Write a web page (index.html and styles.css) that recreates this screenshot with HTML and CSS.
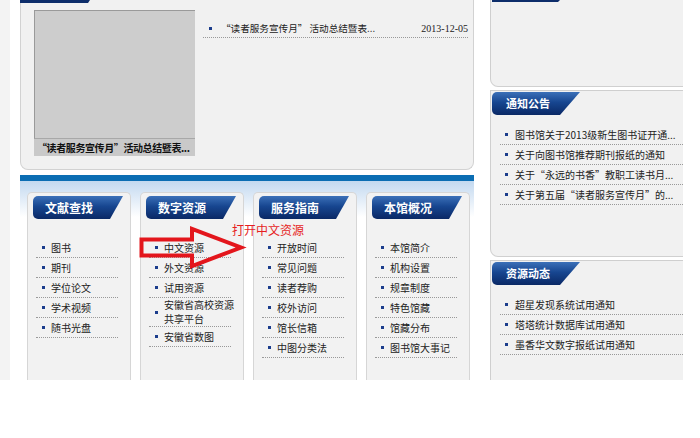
FILE: index.html
```html
<!DOCTYPE html>
<html lang="zh-CN">
<head>
  <meta charset="UTF-8" />
  <title>图书馆首页</title>
  <link rel="stylesheet" href="styles.css">
</head>
<body>
  <div class="page">
    <div class="strip"></div>

    <div class="main">
      <!-- news block -->
      <div class="panel-top">
        <div class="stub"></div>
        <div class="top-body">
          <div class="photo">
            <div class="photo-img"></div>
            <div class="photo-cap">“读者服务宣传月”活动总结暨表...</div>
          </div>
          <ul class="news">
            <li><span>“读者服务宣传月” 活动总结暨表...</span><span class="date">2013-12-05</span></li>
          </ul>
        </div>
      </div>

      <!-- quick links -->
      <div class="links">
        <div class="box">
          <div class="tab">文献查找</div>
          <ul class="list">
            <li>图书</li>
            <li>期刊</li>
            <li>学位论文</li>
            <li>学术视频</li>
            <li>随书光盘</li>
          </ul>
        </div>
        <div class="box">
          <div class="tab">数字资源</div>
          <ul class="list">
            <li>中文资源</li>
            <li>外文资源</li>
            <li>试用资源</li>
            <li class="two">安徽省高校资源<br>共享平台</li>
            <li>安徽省数图</li>
          </ul>
        </div>
        <div class="box">
          <div class="tab">服务指南</div>
          <ul class="list">
            <li>开放时间</li>
            <li>常见问题</li>
            <li>读者荐购</li>
            <li>校外访问</li>
            <li>馆长信箱</li>
            <li>中图分类法</li>
          </ul>
        </div>
        <div class="box">
          <div class="tab">本馆概况</div>
          <ul class="list">
            <li>本馆简介</li>
            <li>机构设置</li>
            <li>规章制度</li>
            <li>特色馆藏</li>
            <li>馆藏分布</li>
            <li>图书馆大事记</li>
          </ul>
        </div>
      </div>
    </div>

    <div class="side">
      <div class="side-box side-top">
        <div class="stub stub-side"></div>
      </div>
      <div class="side-box notice">
        <div class="tab tab-side">通知公告</div>
        <ul class="list side-list">
          <li>图书馆关于2013级新生图书证开通...</li>
          <li>关于向图书馆推荐期刊报纸的通知</li>
          <li>关于“永远的书香”教职工读书月...</li>
          <li>关于第五届“读者服务宣传月”的...</li>
        </ul>
      </div>
      <div class="side-box res">
        <div class="tab tab-side">资源动态</div>
        <ul class="list side-list">
          <li>超星发现系统试用通知</li>
          <li>塔塔统计数据库试用通知</li>
          <li>墨香华文数字报纸试用通知</li>
        </ul>
      </div>
    </div>

    <!-- red annotation -->
    <div class="note">打开中文资源</div>
    <svg class="arrow" width="700" height="438" viewBox="0 0 700 438">
      <polygon points="141.5,239.5 192,239.5 192,229 241,247.5 192,266 192,255.5 141.5,255.5"
               fill="none" stroke="#e3161c" stroke-width="4" stroke-linejoin="miter" />
    </svg>
  </div>
</body>
</html>
```

FILE: styles.css
```css
* { box-sizing: border-box; }
body {
  margin: 0;
  background: #fff;
  font-family: "Noto Sans CJK SC", sans-serif;
  font-size: 10px;
  color: #222;
}
.page {
  position: relative;
  display: flex;
  align-items: flex-start;
  width: 700px;
  height: 438px;
}
.strip {
  width: 10px;
  height: 380px;
  background: #f3f3f3;
}
.main {
  width: 454px;
  margin-left: 10px;
}
.panel-top {
  height: 170px;
  background: #f1f1f1;
  border: 1px solid #d2d2d2;
  border-top: none;
  border-radius: 0 0 8px 8px;
}
.stub {
  width: 70px;
  height: 3px;
  margin-left: -1px;
  background: #0d2d6a;
  clip-path: polygon(0 0, 100% 0, calc(100% - 2px) 100%, 0 100%);
}
.top-body {
  display: flex;
  padding: 7px 0 0 13px;
}
.photo { width: 161px; }
.photo-img {
  height: 129px;
  background: #cdcdcd;
  border-top: 1px solid #9a9a9a;
  border-left: 1px solid #9a9a9a;
  border-bottom: 1px solid #a8a8a8;
}
.photo-cap {
  height: 17px;
  line-height: 17px;
  padding-left: 3px;
  background: #c9c9c9;
  font-size: 10px;
  font-weight: bold;
  letter-spacing: -0.4px;
  color: #111;
  white-space: nowrap;
}
.news {
  list-style: none;
  margin: 9px 0 0 8px;
  padding: 0;
  width: 265px;
}
.news li {
  display: flex;
  align-items: center;
  height: 19px;
  padding-left: 6px;
  border-bottom: 1px dotted #999;
  font-size: 9.6px;
}
.news li::before {
  content: "";
  width: 3px;
  height: 3px;
  margin-right: 9px;
  background: #1c3d8c;
}
.news .date {
  margin-left: auto;
  font-family: "Liberation Serif", serif;
  font-size: 10px;
}
.links {
  display: flex;
  gap: 9px;
  height: 205px;
  margin-top: 5px;
  padding: 11px 0 0 7px;
  border-top: 6px solid #0b6db3;
  background: linear-gradient(#c3d9f0, #fff 36px);
}
.box {
  width: 104px;
  height: 188px;
  padding: 3px 0 0 5px;
  background: #f2f2f2;
  border: 1px solid #d6d6d6;
  border-bottom: none;
  border-radius: 5px 5px 0 0;
}
.tab {
  width: 90px;
  height: 23px;
  line-height: 23px;
  padding-left: 12px;
  color: #fff;
  font-size: 12px;
  font-weight: bold;
  background: linear-gradient(#3b70b8, #174690 45%, #0a2865);
  border-radius: 5px 0 0 5px;
  clip-path: polygon(0 0, 100% 0, calc(100% - 13px) 100%, 0 100%);
}
.list {
  list-style: none;
  margin: 19px 0 0 3px;
  padding: 0;
  width: 82px;
}
.list li {
  display: flex;
  align-items: center;
  height: 20px;
  padding-left: 6px;
  border-bottom: 1px dotted #999;
  white-space: nowrap;
}
.list li::before {
  content: "";
  flex: none;
  width: 3px;
  height: 3px;
  margin-right: 6px;
  background: #1c3d8c;
}
.list li.two {
  height: 29px;
  line-height: 14px;
}
.side {
  width: 193px;
  margin-left: 16px;
}
.side-box {
  background: #f1f1f1;
  border-left: 1px solid #cfcfcf;
}
.side-top {
  height: 87px;
  border-bottom: 1px solid #d0d0d0;
  border-bottom-left-radius: 8px;
}
.stub-side {
  width: 68px;
  height: 2px;
  margin-left: 1px;
}
.notice, .res {
  margin-top: 3px;
  padding: 1px 0 0 1px;
  border-top: 1px solid #cfcfcf;
}
.notice {
  height: 167px;
  border-bottom: 1px solid #d0d0d0;
  border-bottom-left-radius: 8px;
}
.res { height: 120px; }
.tab-side {
  width: 88px;
  padding-left: 14px;
  font-size: 11px;
  clip-path: polygon(0 0, 100% 0, calc(100% - 20px) 100%, 0 100%);
}
.side-list {
  width: auto;
  margin: 10px 0 0 8px;
}
.side-list li { padding-left: 5px; }
.side-list li::before { margin-right: 7px; }
.note {
  position: absolute;
  left: 232px;
  top: 222px;
  font-size: 12px;
  line-height: 16px;
  color: #e61e1e;
}
.arrow {
  position: absolute;
  left: 0;
  top: 0;
  pointer-events: none;
}
```
